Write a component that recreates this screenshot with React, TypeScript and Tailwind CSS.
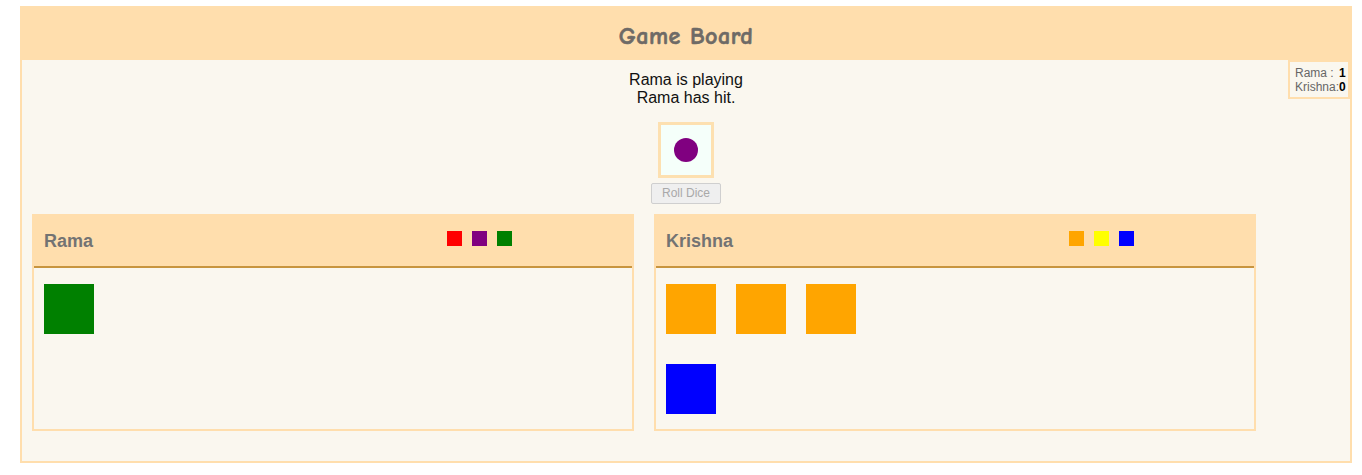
import React from "react";

const Tile = ({ c, small }: { c: string; small?: boolean }) => (
  <div className={small ? "w-[15px] h-[15px]" : "w-[50px] h-[50px]"} style={{ backgroundColor: c }} />
);

function Panel({ name, colors, rows }: { name: string; colors: string[]; rows: string[][] }) {
  return (
    <div className="w-[602px] border-2 border-[#ffdead] bg-[#faf7ef] flex flex-col">
      <div className="h-[54px] bg-[#ffdead] border-b-2 border-[#c8953f] flex items-start px-[10px] -mt-[2px] pt-[2px] box-border">
        <div className="w-[403px] mt-[14px] text-[18px] leading-[22px] font-bold text-[#737373] text-left">{name}</div>
        <div className="flex gap-[10px] mt-[15px]">
          {colors.map((c, i) => (
            <Tile key={i} c={c} small />
          ))}
        </div>
      </div>
      <div className="flex flex-col gap-[30px] pt-[16px] pl-[10px] pb-[15px]">
        {rows.map((r, i) => (
          <div key={i} className="flex gap-[20px]">
            {r.map((c, j) => (
              <Tile key={j} c={c} />
            ))}
          </div>
        ))}
      </div>
    </div>
  );
}

export default function App() {
  return (
    <div className="bg-white min-h-[475px] pt-[6px] pl-[20px]" style={{ fontFamily: '"Liberation Sans", Arial, sans-serif' }}>
      <div className="w-[1332px] border-2 border-[#ffdead] bg-[#faf7ef]">
        <div className="h-[52px] -mt-[2px] pt-[2px] box-content bg-[#ffdead] flex items-center justify-center">
          <h1
            className="mt-[4px] text-[24px] font-bold text-[#6e6a66] tracking-[0.5px]"
            style={{ fontFamily: '"Comic Sans MS", "Comic Neue", "DejaVu Sans", sans-serif', WebkitTextStroke: "0.6px #6e6a66" }}
          >
            Game Board
          </h1>
        </div>
        <div className="relative pt-[11px] pb-[30px] flex flex-col items-center">
          <div className="absolute top-0 right-0 w-[62px] whitespace-nowrap border-2 border-[#ffdead] px-[5px] pt-[4px] pb-[3px] text-[12px] leading-[14px] text-[#666] text-left">
            <div>
              Rama : <b className="ml-[2px] text-black">1</b>
            </div>
            <div>
              Krishna:<b className="text-black">0</b>
            </div>
          </div>
          <div className="text-[16px] leading-[18px] text-[#111] text-center">
            <div>Rama is playing</div>
            <div>Rama has hit.</div>
          </div>
          <div className="mt-[15px] w-[56px] h-[56px] border-[3px] border-[#fde0b0] bg-[#f5fffa] flex items-center justify-center">
            <div className="w-[24px] h-[24px] rounded-full bg-[#800080]" />
          </div>
          <button
            disabled
            className="mt-[5px] w-[70px] h-[21px] bg-[#efefef] border border-[#cfcfcf] rounded-[2px] text-[12px] leading-[19px] text-[#a9a9a9]"
          >
            Roll Dice
          </button>
          <div className="self-stretch flex items-stretch gap-[20px] px-[10px] mt-[10px]">
            <Panel name="Rama" colors={["#ff0000", "#800080", "#008000"]} rows={[["#008000"]]} />
            <Panel
              name="Krishna"
              colors={["#ffa500", "#ffff00", "#0000ff"]}
              rows={[["#ffa500", "#ffa500", "#ffa500"], ["#0000ff"]]}
            />
          </div>
        </div>
      </div>
    </div>
  );
}
